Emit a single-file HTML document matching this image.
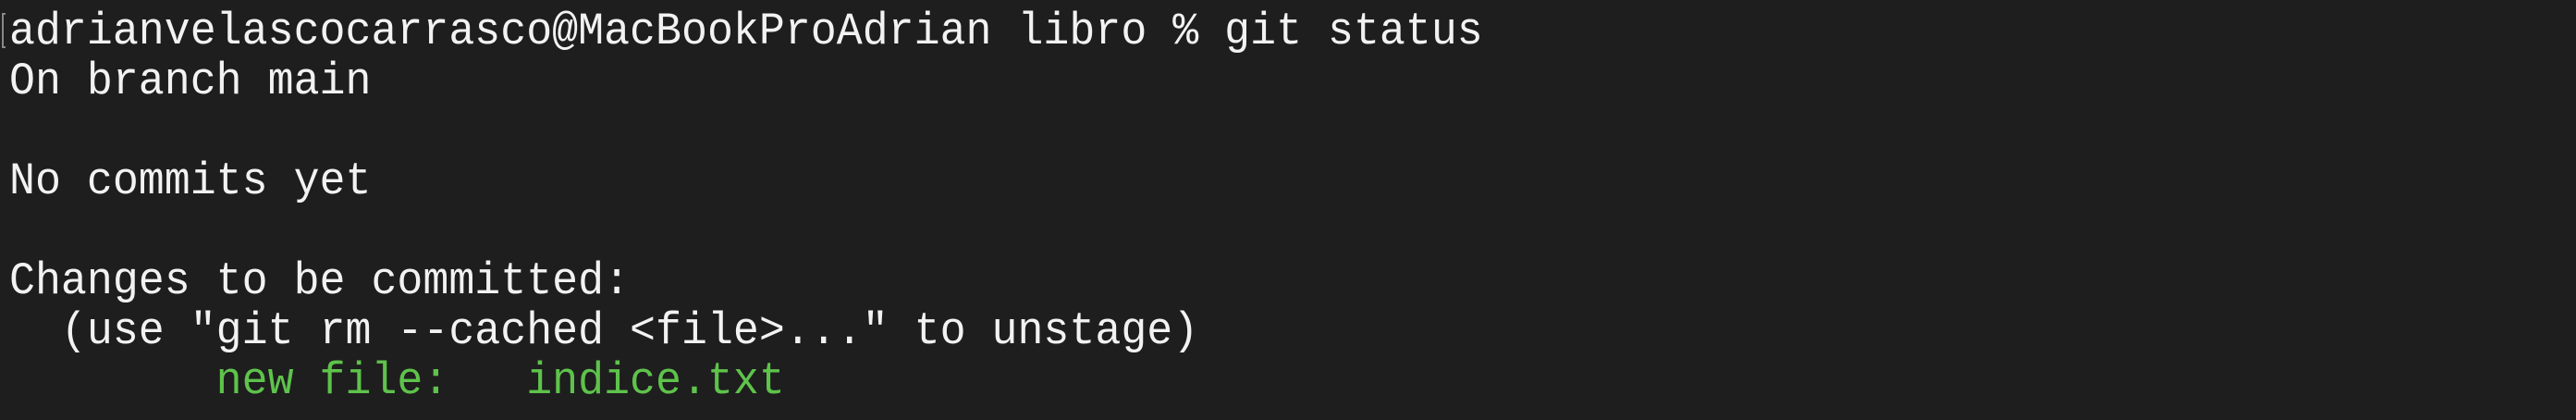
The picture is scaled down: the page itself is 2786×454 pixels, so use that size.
<!DOCTYPE html>
<html><head><meta charset="utf-8"><style>
html,body{margin:0;padding:0;background:#1e1e1e;width:2786px;height:454px;overflow:hidden}
.l{position:absolute;left:10px;font-family:"Liberation Mono",monospace;font-size:46.6px;line-height:54px;color:#f2f2f2;white-space:pre;transform:scaleY(1.05);transform-origin:0 39px}
.g{color:#5ec34b}
.cur{position:absolute;left:2px;top:14px;width:4px;height:38px;border:2px solid #888;border-right:none;box-sizing:border-box}
</style></head><body>
<div class="cur"></div>
<div class="l" style="top:8px">adrianvelascocarrasco@MacBookProAdrian libro % git status</div>
<div class="l" style="top:62px">On branch main</div>
<div class="l" style="top:170px">No commits yet</div>
<div class="l" style="top:278px">Changes to be committed:</div>
<div class="l" style="top:332px">  (use "git rm --cached &lt;file&gt;..." to unstage)</div>
<div class="l g" style="top:386px">        new file:   indice.txt</div>
</body></html>
